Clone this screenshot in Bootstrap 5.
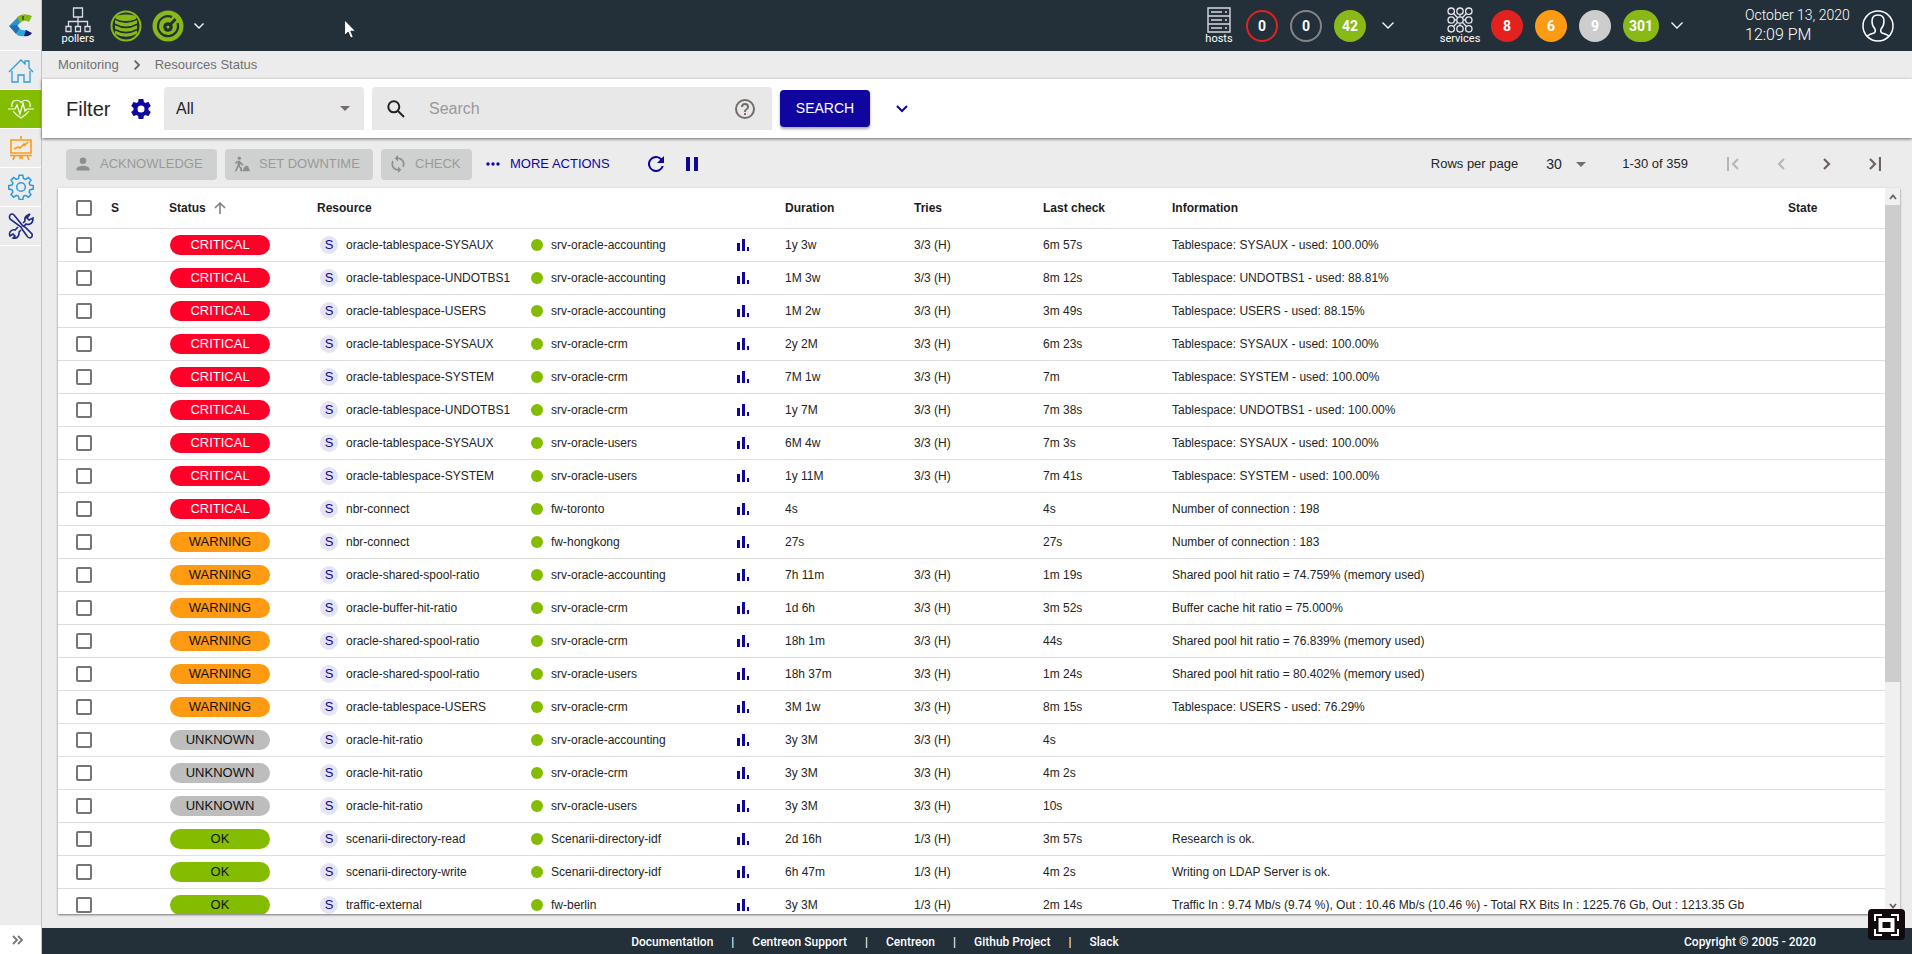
<!DOCTYPE html>
<html lang="en">
<head>
<meta charset="utf-8">
<title>Centreon - Resources Status</title>
<meta name="viewport" content="width=device-width, initial-scale=1">
<link href="https://cdn.jsdelivr.net/npm/bootstrap@5.3.0/dist/css/bootstrap.min.css" rel="stylesheet">
<style>
  :root { --navy:#232f39; --ink:#10069f; --green:#88b917; --page:#ececec; }
  body { font-family:"Liberation Sans",Arial,sans-serif; font-size:12px; line-height:16px; color:#242424; background:var(--page); }
  svg { display:block; flex:none; }
  button, a { color:inherit; text-decoration:none; }
  .plain { background:none; border:0; padding:0; }
  .main-col { min-width:0; }

  .side { width:42px; border-right:1px solid #c4c4c4; background:var(--page); }
  .side .logo-box { height:51px; border-bottom:1px solid #fff; }
  .side .nav-link { height:39px; padding:0; border-bottom:1px solid #fff; border-radius:0; display:flex; align-items:center; justify-content:center; }
  .side .nav-link.active { background:#84bd00; }
  .expand { height:29px; background:#fff; color:#808080; }

  .topbar { height:51px; background:var(--navy); color:#fff; font-family:Roboto,sans-serif; padding:0 18px 0 20px; }
  .labelled { width:32px; font-size:11px; line-height:12px; }
  .wide-label { width:40px; margin-left:46px; }
  .counts { gap:12px; margin-left:11px; }
  .count { width:32px; height:32px; border-radius:16px; border:2px solid transparent; font-size:14px; font-weight:700; display:flex; align-items:center; justify-content:center; }
  .c-red { border-color:#e3221f; } .c-gray { border-color:#858487; }
  .b-red { background:#e3221f; } .b-orange { background:#ff9a13; } .b-gray { background:#cdcdcd; } .b-green { background:var(--green); }
  .clock { width:98px; margin:0 19px 0 62px; }
  .date { font-size:14px; line-height:18px; font-weight:300; }
  .time { font-size:16px; line-height:22px; font-weight:300; }

  .crumbs { height:28px; padding-left:16px; gap:15px; font-size:13px; color:#707070; }
  .filterbar { height:59px; background:#fff; box-shadow:0 1px 3px rgba(0,0,0,.55); padding-left:24px; z-index:1; }
  .filterbar h1 { font-size:20px; font-weight:400; line-height:24px; width:64px; margin:0; }
  .field { height:43px; background-color:#e8e8e8; border-radius:4px 4px 0 0; font-size:16px; color:#242424; }
  .field.form-select { width:200px; border:0; padding:0 12px; margin-left:12px; background-size:10px 5px; background-position:right 14px center; box-shadow:none; }
  .form-select { background-image:url("data:image/svg+xml,%3Csvg xmlns='http://www.w3.org/2000/svg' viewBox='0 0 10 5'%3E%3Cpath fill='%23756b6b' d='M0 0h10L5 5z'/%3E%3C/svg%3E"); }
  .searchbox { width:400px; padding:0 16px 0 15px; gap:24px; }
  .searchbox input { border:0; background:none; outline:0; font-size:16px; }
  .searchbox input::placeholder { color:#999; opacity:1; }
  .go { width:90px; height:37px; background:var(--ink); color:#fff; border:0; border-radius:4px; font-size:14px; padding:0; box-shadow:0 2px 3px rgba(0,0,0,.35); }
  .go:hover { background:#0c0580; color:#fff; }
  .unfold { margin-left:26px; }

  .tools { height:50px; padding:2px 31px 0 24px; font-size:13px; }
  .act { height:31px; border:0; border-radius:4px; font-size:13px; padding:0 10px 0 8px; display:flex; align-items:center; gap:8px; }
  .act:disabled { background:#cfd1d0; color:#999; }
  .w-ack { width:151px; } .w-down { width:148px; } .w-check { width:91px; }
  .more { color:var(--ink); font-size:13px; margin-left:14px; gap:10px; }
  .live { margin-left:38px; gap:22px; }
  .rows-select { width:40px; font-size:14px; border:0; margin:0 36px 0 28px; padding:0 18px 0 0; background-color:transparent; background-size:10px 5px; background-position:right center; line-height:20px; }
  .pager { margin-left:39px; gap:38px; }

  .sheet { background:#fff; margin:0 12px 14px 16px; box-shadow:0 1px 2px rgba(0,0,0,.5); min-height:0; }
  .grid { table-layout:fixed; width:100%; border-collapse:collapse; }
  .grid th, .grid td { padding:0; white-space:nowrap; border-bottom:1px solid #dedede; vertical-align:middle; }
  .grid th { height:40px; font-weight:700; color:#1c1c1c; }
  .grid td { height:33px; }
  .grid .pick { padding-left:18px; }
  .tick { appearance:none; width:16px; height:16px; border:2px solid #757575; border-radius:2px; background:#fff; display:block; margin:0; }
  .c-check{width:53px} .c-s{width:58px} .c-status{width:148px} .c-res{width:214px} .c-host{width:205px} .c-graph{width:49px} .c-num{width:129px} .c-state{width:97px}
  .pill { width:100px; height:20px; border-radius:10px; font-size:13px; line-height:20px; text-align:center; margin-left:1px; color:#111; }
  .CRITICAL { background:#ff0028; color:#fff; } .WARNING { background:#ff9a13; } .UNKNOWN { background:#bdbdbd; } .OK { background:#84bd00; }
  .kind { width:18px; height:18px; border-radius:9px; background:#e4e4f4; color:var(--ink); line-height:18px; text-align:center; font-size:13px; margin:0 8px 0 3px; }
  .dot { width:12px; height:12px; border-radius:6px; background:#84bd00; margin-right:8px; }
  .scroll { width:15px; background:#f0f0f0; flex:none; }
  .scroll .arrow { height:17px; display:flex; align-items:center; justify-content:center; }
  .thumb { height:69%; background:#cdcdcd; }

  .foot { height:26px; background:var(--navy); color:#fff; font:500 12px/26px Roboto,sans-serif; padding:1px 96px 0 48px; }
  .foot-links { gap:18px; }
  .pointer { position:absolute; left:344px; top:19px; z-index:5; }
  .fullscreen { position:absolute; right:7px; bottom:14px; width:37px; height:31px; padding:0; border:0; border-radius:4px; background:#120a0d; z-index:5; display:flex; align-items:center; justify-content:center; }
</style>
</head>
<body class="d-flex vh-100 overflow-hidden position-relative">

<nav class="side d-flex flex-column flex-shrink-0" aria-label="Main">
  <div class="logo-box d-flex align-items-center justify-content-center">
    <svg width="24" height="24" viewBox="0 0 24 24"><path fill="#2b8fd0" d="M0 13 9 4l3 5-4 4z"/><path fill="#1b6fb8" d="M0 13l8-1 3 4-4 5z"/><path fill="#86b81b" d="M8 4q6-5 15-1l-3 6q-5-3-9 1z"/><path fill="#2ba6dd" d="M7 21l4-5q3 2 7 1l-2 6q-6 1-9-2z"/><path fill="#211d70" d="M17 17l6 3q-3 4-8 3z"/><path stroke="#111" d="M14 3v4"/></svg>
  </div>
  <a class="nav-link" href="#" aria-label="Home"><svg width="26" height="28" viewBox="0 0 26 28" fill="none" stroke="#2e9be0" stroke-width="1.3"><path d="M1 16 13 4l4 4V5h4v7l4 4M4 15v11h6v-7h6v7h6V15"/></svg></a>
  <a class="nav-link active" href="#" aria-label="Monitoring"><svg width="26" height="20" viewBox="0 0 26 20" fill="none" stroke="#fff" stroke-width="1.2"><path d="M0 10h7l2-4 3 9 3-11 2 8 2-2h7M4 8q-1-5 3-6.500 4-1 6 2 2-3 6-2 4 1.500 3 6.500M5 12q3 4 8 7 5-3 8-7"/></svg></a>
  <a class="nav-link" href="#" aria-label="Reporting"><svg width="24" height="26" viewBox="0 0 24 26" fill="none" stroke="#ff9a13" stroke-width="1.6"><path d="M12 1v3M2 5h20v13H2zM1 20.500h22M6 20l-2 5M18 20l2 5M11 20v4M13 20v4M5 14l4-2 2 1 4-4 1 1 3-3"/></svg></a>
  <a class="nav-link" href="#" aria-label="Configuration"><svg width="26" height="26" viewBox="0 0 24 24" fill="none" stroke="#2e9be0" stroke-width="1.4"><circle cx="12" cy="12" r="4"/><path d="M10.300 1.200h3.400l.6 3 2 .8 2.500-1.700 2.400 2.400L19.500 8.200l.8 2 3 .5v3.200l-3 .6-.8 2 1.700 2.500-2.400 2.400-2.500-1.700-2 .8-.6 3h-3.400l-.6-3-2-.8-2.500 1.700-2.400-2.400 1.700-2.500-.8-2-3-.6v-3.200l3-.5.8-2-1.700-2.500 2.400-2.400L7.700 5l2-.8z"/></svg></a>
  <a class="nav-link" href="#" aria-label="Administration"><svg width="26" height="26" viewBox="0 0 26 26" fill="none" stroke="#1f2a86" stroke-width="1.600"><path d="M2 2q2-2 4 0l9 11 2 1 7 7q1 3-2 4-2 0-3-2l-5-7-1-2L2 6Q1 4 2 2zM15 10l2-2q-1-4 3-6l2-1-3 4 2 2 4-2q0 5-3 6-2 1-4 0l-2 2M10 14l-3 3q-3-1-5 2-1 2 0 4l3-2 2 2-2 2q5 1 6-4v-2l2-2"/></svg></a>
  <button class="expand plain mt-auto d-flex align-items-center ps-2 w-100" aria-label="Expand menu"><svg class="ms-1" width="12" height="10" viewBox="0 0 12 10" fill="none" stroke="#777" stroke-width="1.800"><path d="m1 1 4 4-4 4M6 1l4 4-4 4"/></svg></button>
</nav>

<div class="main-col d-flex flex-column flex-grow-1">
  <header class="topbar d-flex align-items-center flex-shrink-0">
    <div class="labelled d-flex flex-column align-items-center">
      <svg width="26" height="26" viewBox="0 0 26 26" fill="none" stroke="#dcdce6" stroke-width="1.300"><path d="M8.500 1h9v9h-9zM13 10v9M3.500 19v-4.500h19V19M1 19.500h5v5H1zM10.500 19.500h5v5h-5zM20 19.500h5v5h-5z"/></svg>
      <span>pollers</span>
    </div>
    <svg class="ms-3" width="32" height="32" viewBox="0 0 32 32"><circle cx="16" cy="16" r="14.500" fill="#232f39" stroke="#88b917" stroke-width="2"/><g fill="#88b917"><path d="M5 10q11 6 22 0v3.500q-11 6-22 0zM5 15.200q11 6 22 0v3.500q-11 6-22 0zM5 20.400q11 6 22 0v3.300q-11 6-22 0z"/><ellipse cx="16" cy="7.700" rx="10.500" ry="3.300"/></g></svg>
    <svg class="ms-2 me-1" width="36" height="32" viewBox="-2 0 36 32"><circle cx="16" cy="16" r="15.500" fill="#88b917"/><g fill="none" stroke="#232f39" stroke-width="2.200"><path d="M20 7a10 10 0 1 0 5.500 6"/><circle cx="16" cy="17" r="4.800" fill="#232f39" stroke="none"/><path d="m17 16 6.500-7" stroke-width="2.800"/></g><circle cx="16" cy="17" r="1.500" fill="#88b917"/></svg>
    <svg class="ms-1" width="10" height="6" viewBox="0 0 10 6" fill="none" stroke="#fff" stroke-width="1.400"><path d="m.5.5 4.500 4.500L9.500.5"/></svg>

    <div class="ms-auto labelled d-flex flex-column align-items-center">
      <svg width="24" height="26" viewBox="0 0 24 26" fill="none" stroke="#d8d8e0" stroke-width="1.400"><path d="M1 1h22v24H1zM1 9h22M1 17h22M4 5h11M4 13h11M4 21h11M18 5h2M18 13h2M18 21h2"/></svg>
      <span>hosts</span>
    </div>
    <div class="counts d-flex align-items-center">
      <span class="count c-red">0</span>
      <span class="count c-gray">0</span>
      <span class="count b-green">42</span>
      <svg class="ms-1" width="12" height="7" viewBox="0 0 12 7" fill="none" stroke="#fff" stroke-width="1.300"><path d="m.5.5 5.500 5.500L11.500.5"/></svg>
    </div>
    <div class="labelled wide-label d-flex flex-column align-items-center">
      <svg width="26" height="26" viewBox="0 0 26 26" fill="none" stroke="#e8e8ee" stroke-width="1.300"><circle cx="4.200" cy="4.200" r="3.200"/><circle cx="13" cy="4.200" r="3.200"/><circle cx="21.800" cy="4.200" r="3.200"/><circle cx="4.200" cy="13" r="3.200"/><circle cx="13" cy="13" r="3.200"/><circle cx="21.800" cy="13" r="3.200"/><circle cx="4.200" cy="21.800" r="3.200"/><circle cx="13" cy="21.800" r="3.200"/><circle cx="21.800" cy="21.800" r="3.200"/><path d="m6.500 6.500 4.200 4.200M19.500 6.500l-4.200 4.200M6.500 19.500l4.200-4.200M19.500 19.500l-4.200-4.200M13 7.500v2M13 16.500v2M7.500 13h2M16.500 13h2"/></svg>
      <span>services</span>
    </div>
    <div class="counts d-flex align-items-center">
      <span class="count b-red">8</span>
      <span class="count b-orange">6</span>
      <span class="count b-gray">9</span>
      <span class="count b-green px-3">301</span>
      <svg width="12" height="7" viewBox="0 0 12 7" fill="none" stroke="#fff" stroke-width="1.300"><path d="m.5.5 5.500 5.500L11.500.5"/></svg>
    </div>
    <div class="clock"><div class="date text-nowrap">October 13, 2020</div><div class="time">12:09 PM</div></div>
    <svg width="32" height="32" viewBox="0 0 32 32" fill="none" stroke="#fff" stroke-width="1.500"><circle cx="16" cy="16" r="15"/><path d="M5 26q3-2 7-3 2-1 1-4-3-3-3-8 0-6 6-6t6 6q0 5-3 8-1 3 1 4 4 1 7 3"/></svg>
  </header>

  <nav class="crumbs d-flex align-items-center flex-shrink-0" aria-label="Breadcrumb">
    <a href="#">Monitoring</a>
    <svg width="6" height="10" viewBox="0 0 6 10" fill="none" stroke="#666" stroke-width="1.800"><path d="m.7.7 4.300 4.300L.7 9.300"/></svg>
    <a href="#">Resources Status</a>
  </nav>

  <form class="filterbar d-flex align-items-center flex-shrink-0 position-relative" onsubmit="return false">
    <h1>Filter</h1>
    <button class="plain" type="button" aria-label="Filter settings"><svg width="22" height="22" viewBox="1 1 22 22" fill="#10069f"><path d="M19.430 12.980c.040-.320.070-.640.070-.980s-.030-.660-.070-.980l2.110-1.650c.190-.150.240-.420.120-.640l-2-3.460c-.120-.220-.390-.3-.610-.220l-2.490 1c-.520-.4-1.080-.730-1.690-.980l-.380-2.650C14.460 2.180 14.250 2 14 2h-4c-.25 0-.46.180-.49.420l-.38 2.650c-.61.250-1.170.590-1.690.980l-2.490-1c-.23-.090-.49 0-.61.220l-2 3.460c-.13.220-.07.490.12.640l2.110 1.650c-.04.320-.07.650-.07.980s.03.660.07.980l-2.110 1.650c-.19.150-.24.420-.12.640l2 3.460c.12.220.39.300.61.220l2.490-1c.52.400 1.080.730 1.690.980l.38 2.650c.03.240.24.420.49.420h4c.25 0 .46-.18.490-.42l.38-2.650c.61-.25 1.170-.59 1.690-.98l2.490 1c.23.090.49 0 .61-.22l2-3.460c.12-.22.070-.49-.12-.64zM12 15.500A3.500 3.500 0 1 1 12 8.500a3.500 3.500 0 0 1 0 7z"/></svg></button>
    <select class="form-select field" aria-label="Filter"><option>All</option></select>
    <div class="field searchbox d-flex align-items-center ms-2">
      <svg width="18" height="18" viewBox="0 0 18 18" fill="none" stroke="#222" stroke-width="2"><circle cx="6.800" cy="6.800" r="5.500"/><path d="m11 11 6 6"/></svg>
      <input class="flex-grow-1 p-0" type="text" placeholder="Search" aria-label="Search">
      <svg width="22" height="22" viewBox="1 1 22 22" fill="#756b6b"><path d="M11 18h2v-2h-2zm1-16a10 10 0 1 0 0 20 10 10 0 0 0 0-20m0 18a8 8 0 1 1 0-16 8 8 0 0 1 0 16m0-14a4 4 0 0 0-4 4h2a2 2 0 1 1 4 0c0 2-3 1.750-3 5h2c0-2.250 3-2.500 3-5a4 4 0 0 0-4-4"/></svg>
    </div>
    <button class="go btn ms-2">SEARCH</button>
    <button class="plain unfold" type="button" aria-label="More filters"><svg width="12" height="8" viewBox="0 0 12 8" fill="none" stroke="#10069f" stroke-width="2"><path d="m1 1 5 5 5-5"/></svg></button>
  </form>

  <div class="tools d-flex align-items-center flex-shrink-0">
    <div class="d-flex align-items-center gap-2">
      <button class="act w-ack" disabled><svg width="18" height="18" viewBox="1 1 22 22" fill="#8e8e8e"><path d="M12 12a4 4 0 1 0 0-8 4 4 0 0 0 0 8m0 2c-2.670 0-8 1.340-8 4v2h16v-2c0-2.660-5.330-4-8-4"/></svg>ACKNOWLEDGE</button>
      <button class="act w-down" disabled><svg width="18" height="18" viewBox="-1 -1 20 20" fill="#8e8e8e"><circle cx="6" cy="2.500" r="1.900"/><path d="M3 6q3-2 5 1l3 3-1 1-3-2v3l2 1v4H7v-3l-2-2-2 5H1l3-7V7L2 9 1 8zM9 17l3-5 1-1h2l1 1 2 5z"/></svg>SET DOWNTIME</button>
      <button class="act w-check" disabled><svg width="18" height="18" viewBox="1 1 22 22" fill="#8e8e8e"><path d="M12 4V1L8 5l4 4V6a6 6 0 0 1 5.250 8.800l1.460 1.460A8 8 0 0 0 12 4m0 14a6 6 0 0 1-5.250-8.800L5.290 7.740A8 8 0 0 0 12 20v3l4-4-4-4z"/></svg>CHECK</button>
    </div>
    <button class="plain more d-flex align-items-center"><svg width="14" height="4" viewBox="0 0 14 4" fill="#10069f"><circle cx="2" cy="2" r="1.700"/><circle cx="7" cy="2" r="1.700"/><circle cx="12" cy="2" r="1.700"/></svg>MORE ACTIONS</button>
    <div class="live d-flex align-items-center">
      <button class="plain" aria-label="Refresh"><svg width="16" height="16" viewBox="4 4 16 16" fill="#10069f"><path d="M17.650 6.350A8 8 0 1 0 19.730 14h-2.080A6 6 0 1 1 12 6c1.660 0 3.140.690 4.220 1.780L13 11h7V4z"/></svg></button>
      <button class="plain" aria-label="Pause"><svg width="12" height="14" viewBox="0 0 12 14" fill="#10069f"><path d="M0 0h4v14H0zM8 0h4v14H8z"/></svg></button>
    </div>

    <label class="ms-auto" for="rpp">Rows per page</label>
    <select id="rpp" class="form-select rows-select"><option>30</option></select>
    <span>1-30 of 359</span>
    <div class="pager d-flex align-items-center">
      <button class="plain" aria-label="First page"><svg width="12" height="14" viewBox="0 0 12 14" fill="none" stroke="#b9b3b3" stroke-width="2"><path d="M1 0v14M11 2 6 7l5 5"/></svg></button>
      <button class="plain" aria-label="Previous page"><svg width="8" height="14" viewBox="0 0 8 14" fill="none" stroke="#b9b3b3" stroke-width="2"><path d="M7 2 2 7l5 5"/></svg></button>
      <button class="plain" aria-label="Next page"><svg width="8" height="14" viewBox="0 0 8 14" fill="none" stroke="#6c6163" stroke-width="2.200"><path d="m1 2 5 5-5 5"/></svg></button>
      <button class="plain" aria-label="Last page"><svg width="12" height="14" viewBox="0 0 12 14" fill="none" stroke="#6c6163" stroke-width="2.200"><path d="M11 0v14M1 2l5 5-5 5"/></svg></button>
    </div>
  </div>

  <main class="sheet d-flex flex-grow-1">
    <div class="flex-grow-1 overflow-hidden">
      <table class="grid">
        <colgroup><col class="c-check"><col class="c-s"><col class="c-status"><col class="c-res"><col class="c-host"><col class="c-graph"><col class="c-num"><col class="c-num"><col class="c-num"><col><col class="c-state"></colgroup>
        <thead><tr>
          <th class="pick"><input class="tick" type="checkbox" aria-label="Select all"></th>
          <th>S</th>
          <th><span class="d-flex align-items-center gap-2">Status<svg width="12" height="12" viewBox="0 0 12 12" fill="none" stroke="#808080" stroke-width="1.600"><path d="M6 12V1M1 6l5-5 5 5"/></svg></span></th>
          <th>Resource</th><th></th><th></th><th>Duration</th><th>Tries</th><th>Last check</th><th>Information</th><th>State</th>
        </tr></thead>
        <tbody id="rows"></tbody>
      </table>
    </div>
    <div class="scroll d-flex flex-column" aria-hidden="true">
      <div class="arrow"><svg width="8" height="6" viewBox="0 0 8 6" fill="none" stroke="#6c6163" stroke-width="1.800"><path d="m1 5 3-3.500L7 5"/></svg></div>
      <div class="flex-grow-1"><div class="thumb"></div></div>
      <div class="arrow"><svg width="8" height="6" viewBox="0 0 8 6" fill="none" stroke="#6c6163" stroke-width="1.800"><path d="m1 1 3 3.500L7 1"/></svg></div>
    </div>
  </main>

  <footer class="foot d-flex flex-shrink-0">
    <div class="foot-links flex-grow-1 d-flex justify-content-center">
      <a href="#">Documentation</a><span>|</span><a href="#">Centreon Support</a><span>|</span><a href="#">Centreon</a><span>|</span><a href="#">Github Project</a><span>|</span><a href="#">Slack</a>
    </div>
    <span class="ps-4">Copyright © 2005 - 2020</span>
  </footer>
</div>

<svg class="pointer" width="12" height="20" viewBox="0 0 12 20"><path fill="#fff" stroke="#111" stroke-width=".8" d="M.6 1v15.500l3.600-3.400 2.500 6 2.600-1.100-2.500-5.800h4.800z"/></svg>
<button class="fullscreen" aria-label="Full screen"><svg width="25" height="22" viewBox="0 0 25 22" fill="none" stroke="#fff" stroke-width="2"><path d="M1 7V1h7M17 1h7v6M24 15v6h-7M8 21H1v-6"/><path stroke-width="4" d="M6.500 6h12v10h-12z"/></svg></button>

<script src="https://cdn.jsdelivr.net/npm/bootstrap@5.3.0/dist/js/bootstrap.bundle.min.js"></script>
<script>
  const resources = [
    ['CRITICAL','oracle-tablespace-SYSAUX','srv-oracle-accounting','1y 3w','3/3 (H)','6m 57s','Tablespace: SYSAUX - used: 100.00%'],
    ['CRITICAL','oracle-tablespace-UNDOTBS1','srv-oracle-accounting','1M 3w','3/3 (H)','8m 12s','Tablespace: UNDOTBS1 - used: 88.81%'],
    ['CRITICAL','oracle-tablespace-USERS','srv-oracle-accounting','1M 2w','3/3 (H)','3m 49s','Tablespace: USERS - used: 88.15%'],
    ['CRITICAL','oracle-tablespace-SYSAUX','srv-oracle-crm','2y 2M','3/3 (H)','6m 23s','Tablespace: SYSAUX - used: 100.00%'],
    ['CRITICAL','oracle-tablespace-SYSTEM','srv-oracle-crm','7M 1w','3/3 (H)','7m','Tablespace: SYSTEM - used: 100.00%'],
    ['CRITICAL','oracle-tablespace-UNDOTBS1','srv-oracle-crm','1y 7M','3/3 (H)','7m 38s','Tablespace: UNDOTBS1 - used: 100.00%'],
    ['CRITICAL','oracle-tablespace-SYSAUX','srv-oracle-users','6M 4w','3/3 (H)','7m 3s','Tablespace: SYSAUX - used: 100.00%'],
    ['CRITICAL','oracle-tablespace-SYSTEM','srv-oracle-users','1y 11M','3/3 (H)','7m 41s','Tablespace: SYSTEM - used: 100.00%'],
    ['CRITICAL','nbr-connect','fw-toronto','4s','','4s','Number of connection : 198'],
    ['WARNING','nbr-connect','fw-hongkong','27s','','27s','Number of connection : 183'],
    ['WARNING','oracle-shared-spool-ratio','srv-oracle-accounting','7h 11m','3/3 (H)','1m 19s','Shared pool hit ratio = 74.759% (memory used)'],
    ['WARNING','oracle-buffer-hit-ratio','srv-oracle-crm','1d 6h','3/3 (H)','3m 52s','Buffer cache hit ratio = 75.000%'],
    ['WARNING','oracle-shared-spool-ratio','srv-oracle-crm','18h 1m','3/3 (H)','44s','Shared pool hit ratio = 76.839% (memory used)'],
    ['WARNING','oracle-shared-spool-ratio','srv-oracle-users','18h 37m','3/3 (H)','1m 24s','Shared pool hit ratio = 80.402% (memory used)'],
    ['WARNING','oracle-tablespace-USERS','srv-oracle-crm','3M 1w','3/3 (H)','8m 15s','Tablespace: USERS - used: 76.29%'],
    ['UNKNOWN','oracle-hit-ratio','srv-oracle-accounting','3y 3M','3/3 (H)','4s',''],
    ['UNKNOWN','oracle-hit-ratio','srv-oracle-crm','3y 3M','3/3 (H)','4m 2s',''],
    ['UNKNOWN','oracle-hit-ratio','srv-oracle-users','3y 3M','3/3 (H)','10s',''],
    ['OK','scenarii-directory-read','Scenarii-directory-idf','2d 16h','1/3 (H)','3m 57s','Research is ok.'],
    ['OK','scenarii-directory-write','Scenarii-directory-idf','6h 47m','1/3 (H)','4m 2s','Writing on LDAP Server is ok.'],
    ['OK','traffic-external','fw-berlin','3y 3M','1/3 (H)','2m 14s','Traffic In : 9.74 Mb/s (9.74 %), Out : 10.46 Mb/s (10.46 %) - Total RX Bits In : 1225.76 Gb, Out : 1213.35 Gb']
  ];
  document.getElementById('rows').innerHTML = resources.map(([status, name, host, duration, tries, last, info]) => `
    <tr>
      <td class="pick"><input class="tick" type="checkbox" aria-label="Select ${name} on ${host}"></td>
      <td></td>
      <td><div class="pill ${status}">${status}</div></td>
      <td><div class="d-flex align-items-center"><span class="kind">S</span>${name}</div></td>
      <td><div class="d-flex align-items-center"><span class="dot"></span>${host}</div></td>
      <td><svg width="14" height="14" viewBox="0 0 14 14" fill="#10069f"><path d="M1 5h3v8H1zM6 1h3v12H6zM11 9h2v4h-2z"/></svg></td>
      <td>${duration}</td><td>${tries}</td><td>${last}</td><td>${info}</td><td></td>
    </tr>`).join('');
</script>
</body>
</html>
